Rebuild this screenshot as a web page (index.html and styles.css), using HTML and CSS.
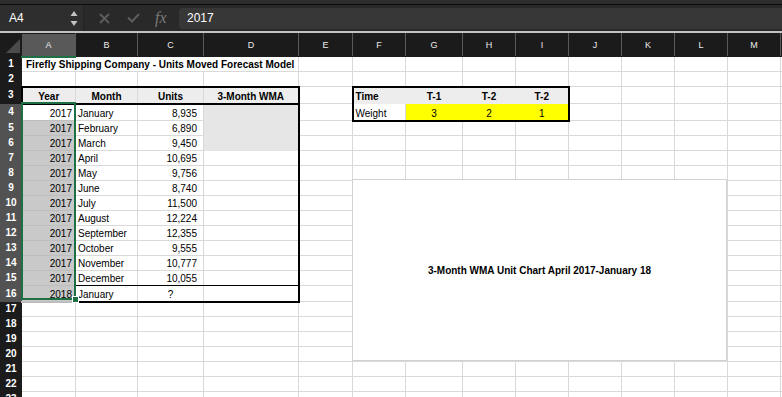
FILE: index.html
```html
<!doctype html>
<html lang="en">
<head>
    <meta charset="UTF-8">
    <title>Firefly Shipping Company - Forecast</title>
    <link rel="stylesheet" href="styles.css">
</head>
<body>

    <div class="topbar"></div>

    <div class="formula-bar">
        <div class="name-box">
            <span>A4</span>
            <svg class="spin" width="8" height="17" viewBox="0 0 8 17">
                <path d="M4 1 L7.5 6 L0.5 6 Z" fill="#c4c4c4"/>
                <path d="M4 16 L7.5 11 L0.5 11 Z" fill="#c4c4c4"/>
            </svg>
        </div>
        <div class="fx-tools">
            <svg width="11" height="11" viewBox="0 0 11 11">
                <path d="M1 1 L10 10 M10 1 L1 10" stroke="#5c5c5c" stroke-width="2"/>
            </svg>
            <svg width="13" height="10" viewBox="0 0 13 10">
                <path d="M1 4.5 L5 8.5 L12 1" stroke="#5c5c5c" stroke-width="2" fill="none"/>
            </svg>
            <i class="fx">fx</i>
        </div>
        <div class="formula-input">2017</div>
    </div>

    <div class="sheet">
        <table class="grid">
            <colgroup>
                <col style="width:21px">
                <col style="width:54px">
                <col style="width:62px">
                <col style="width:66px">
                <col style="width:95px">
                <col style="width:54px">
                <col style="width:53px">
                <col style="width:57px">
                <col style="width:53px">
                <col style="width:53px">
                <col style="width:53px">
                <col style="width:53px">
                <col style="width:53px">
                <col style="width:53px">
                <col style="width:53px">
            </colgroup>

            <tr class="heads">
                <th class="corner">
                    <svg width="21" height="22" viewBox="0 0 21 22"><path d="M19 5 L19 19 L5 19 Z" fill="#4b4b4b"/></svg>
                </th>
                <th class="ch on">A</th>
                <th class="ch">B</th>
                <th class="ch">C</th>
                <th class="ch">D</th>
                <th class="ch">E</th>
                <th class="ch">F</th>
                <th class="ch">G</th>
                <th class="ch">H</th>
                <th class="ch">I</th>
                <th class="ch">J</th>
                <th class="ch">K</th>
                <th class="ch">L</th>
                <th class="ch">M</th>
                <th class="ch"></th>
            </tr>

            <tr>
                <th class="rh">1</th>
                <td colspan="4" class="title">Firefly Shipping Company - Units Moved Forecast Model</td>
                <td></td><td></td><td></td><td></td><td></td><td></td><td></td><td></td><td></td><td></td>
            </tr>
            <tr>
                <th class="rh">2</th>
                <td></td><td></td><td></td><td></td>
                <td></td><td></td><td></td><td></td><td></td><td></td><td></td><td></td><td></td><td></td>
            </tr>
            <tr class="tall">
                <th class="rh">3</th>
                <td class="hd left">Year</td>
                <td class="hd">Month</td>
                <td class="hd">Units</td>
                <td class="hd right">3-Month WMA</td>
                <td></td>
                <td class="w-hd w-left">Time</td>
                <td class="w-hd c">T-1</td>
                <td class="w-hd c">T-2</td>
                <td class="w-hd c w-right">T-2</td>
                <td></td><td></td><td></td><td></td><td></td>
            </tr>
            <tr class="tall">
                <th class="rh on">4</th>
                <td class="yr active">2017</td>
                <td>January</td>
                <td class="num">8,935</td>
                <td class="right wma">&nbsp;</td>
                <td></td>
                <td class="w-row w-left">Weight</td>
                <td class="w-row yel c">3</td>
                <td class="w-row yel c">2</td>
                <td class="w-row yel c w-right">1</td>
                <td></td><td></td><td></td><td></td><td></td>
            </tr>
            <tr>
                <th class="rh on">5</th>
                <td class="yr">2017</td><td>February</td><td class="num">6,890</td><td class="right wma"></td>
                <td></td><td></td><td></td><td></td><td></td><td></td><td></td><td></td><td></td><td></td>
            </tr>
            <tr>
                <th class="rh on">6</th>
                <td class="yr">2017</td><td>March</td><td class="num">9,450</td><td class="right wma"></td>
                <td></td><td></td><td></td><td></td><td></td><td></td><td></td><td></td><td></td><td></td>
            </tr>
            <tr>
                <th class="rh on">7</th>
                <td class="yr">2017</td><td>April</td><td class="num">10,695</td><td class="right"></td>
                <td></td><td></td><td></td><td></td><td></td><td></td><td></td><td></td><td></td><td></td>
            </tr>
            <tr>
                <th class="rh on">8</th>
                <td class="yr">2017</td><td>May</td><td class="num">9,756</td><td class="right"></td>
                <td></td><td></td><td></td><td></td><td></td><td></td><td></td><td></td><td></td><td></td>
            </tr>
            <tr>
                <th class="rh on">9</th>
                <td class="yr">2017</td><td>June</td><td class="num">8,740</td><td class="right"></td>
                <td></td><td></td><td></td><td></td><td></td><td></td><td></td><td></td><td></td><td></td>
            </tr>
            <tr>
                <th class="rh on">10</th>
                <td class="yr">2017</td><td>July</td><td class="num">11,500</td><td class="right"></td>
                <td></td><td></td><td></td><td></td><td></td><td></td><td></td><td></td><td></td><td></td>
            </tr>
            <tr>
                <th class="rh on">11</th>
                <td class="yr">2017</td><td>August</td><td class="num">12,224</td><td class="right"></td>
                <td></td><td></td><td></td><td></td><td></td><td></td><td></td><td></td><td></td><td></td>
            </tr>
            <tr>
                <th class="rh on">12</th>
                <td class="yr">2017</td><td>September</td><td class="num">12,355</td><td class="right"></td>
                <td></td><td></td><td></td><td></td><td></td><td></td><td></td><td></td><td></td><td></td>
            </tr>
            <tr>
                <th class="rh on">13</th>
                <td class="yr">2017</td><td>October</td><td class="num">9,555</td><td class="right"></td>
                <td></td><td></td><td></td><td></td><td></td><td></td><td></td><td></td><td></td><td></td>
            </tr>
            <tr>
                <th class="rh on">14</th>
                <td class="yr">2017</td><td>November</td><td class="num">10,777</td><td class="right"></td>
                <td></td><td></td><td></td><td></td><td></td><td></td><td></td><td></td><td></td><td></td>
            </tr>
            <tr>
                <th class="rh on">15</th>
                <td class="yr">2017</td><td class="pre-last">December</td><td class="num pre-last">10,055</td><td class="right pre-last"></td>
                <td></td><td></td><td></td><td></td><td></td><td></td><td></td><td></td><td></td><td></td>
            </tr>
            <tr class="mid">
                <th class="rh on">16</th>
                <td class="yr last">2018</td><td class="last">January</td><td class="last c">?</td><td class="right last"></td>
                <td></td><td></td><td></td><td></td><td></td><td></td><td></td><td></td><td></td><td></td>
            </tr>
            <tr>
                <th class="rh">17</th>
                <td></td><td></td><td></td><td></td>
                <td></td><td></td><td></td><td></td><td></td><td></td><td></td><td></td><td></td><td></td>
            </tr>
            <tr>
                <th class="rh">18</th>
                <td></td><td></td><td></td><td></td>
                <td></td><td></td><td></td><td></td><td></td><td></td><td></td><td></td><td></td><td></td>
            </tr>
            <tr>
                <th class="rh">19</th>
                <td></td><td></td><td></td><td></td>
                <td></td><td></td><td></td><td></td><td></td><td></td><td></td><td></td><td></td><td></td>
            </tr>
            <tr>
                <th class="rh">20</th>
                <td></td><td></td><td></td><td></td>
                <td></td><td></td><td></td><td></td><td></td><td></td><td></td><td></td><td></td><td></td>
            </tr>
            <tr>
                <th class="rh">21</th>
                <td></td><td></td><td></td><td></td>
                <td></td><td></td><td></td><td></td><td></td><td></td><td></td><td></td><td></td><td></td>
            </tr>
            <tr>
                <th class="rh">22</th>
                <td></td><td></td><td></td><td></td>
                <td></td><td></td><td></td><td></td><td></td><td></td><td></td><td></td><td></td><td></td>
            </tr>
            <tr>
                <th class="rh">23</th>
                <td></td><td></td><td></td><td></td>
                <td></td><td></td><td></td><td></td><td></td><td></td><td></td><td></td><td></td><td></td>
            </tr>
        </table>

        <!-- selected range A4:A16 -->
        <div class="selection"></div>

        <div class="chart">
            <span>3-Month WMA Unit Chart April 2017-January 18</span>
        </div>
    </div>

</body>
</html>
```

FILE: styles.css
```css
body{
    margin: 0;
    background-color: #fff;
    font-family: "Liberation Sans", Arial, sans-serif;
    overflow: hidden;
}

.topbar{
    height: 4px;
    background-color: #2d2d2d;
    border-bottom: 1px solid #0c0c0c;
}

.formula-bar{
    display: flex;
    height: 26px;
    background-color: #292929;
    color: #fff;
    font-size: 12px;
}

.name-box{
    width: 84px;
    display: flex;
    align-items: center;
    justify-content: space-between;
    padding: 0 5px 0 9px;
    box-sizing: border-box;
    background-color: #2e2e2e;
    border-right: 1px solid #222;
}

.fx-tools{
    width: 95px;
    display: flex;
    align-items: center;
    gap: 17px;
    padding-left: 15px;
    box-sizing: border-box;
}

.fx{
    font-family: "Liberation Serif", serif;
    font-size: 16px;
    color: #7a7a7a;
    margin-left: -2px;
}

.formula-input{
    flex: 1;
    margin: 3px 0 2px;
    padding-left: 8px;
    line-height: 21px;
    background-color: #373737;
    border-radius: 4px 0 0 4px;
}

.sheet{
    position: relative;
    border-top: 2px solid #c2c2c2;
    overflow: hidden;
    width: 782px;
}

.grid{
    border-collapse: collapse;
    table-layout: fixed;
    width: 833px;
}

.grid tr{
    height: 15px;
}

.grid tr.heads{ height: 22px; }
.grid tr.tall{ height: 17px; }
.grid tr.mid{ height: 16px; }

.grid td{
    border: 1px solid #d9d9d9;
    padding: 0 2px;
    font-size: 10px;
    line-height: 12px;
    color: #000;
    white-space: nowrap;
    overflow: hidden;
    vertical-align: bottom;
}

.ch{
    background-color: #1b1b1b;
    color: #ececec;
    font-size: 9px;
    font-weight: normal;
    border: 1px solid #1b1b1b;
    border-right-color: #5a5a5a;
    padding: 0;
}

.ch.on{
    background-color: #595959;
    border-bottom: 2px solid #1d7044;
}

.corner{
    background-color: #1b1b1b;
    border: 1px solid #1b1b1b;
    padding: 0;
    line-height: 0;
}

.rh{
    background-color: #1b1b1b;
    color: #fff;
    font-size: 10px;
    font-weight: bold;
    border: 1px solid #1b1b1b;
    padding: 0;
    text-align: center;
    line-height: 12px;
}

.rh.on{
    background-color: #525252;
    border-color: #525252;
}

.grid td.title{
    font-weight: bold;
    padding-left: 4px;
}

.grid td.hd{
    background-color: #ededed;
    font-weight: bold;
    text-align: center;
    border-top: 2px solid #000;
    border-bottom: 2px solid #000;
}

.grid td.left{ border-left: 2px solid #000; }
.grid td.right{ border-right: 2px solid #000; }

.grid td.pre-last{ border-bottom: 1px solid #000; }
.grid td.last{ border-bottom: 2px solid #000; }

.grid td.yr{
    text-align: right;
    padding-right: 3px;
    background-color: #c9c9c9;
    border-bottom-color: #bdbdbd;
}

.grid td.yr.active{
    background-color: #fff;
}

.grid td.num{
    text-align: right;
    padding-right: 6px;
}

.grid td.c{ text-align: center; }

.grid td.wma{
    background-color: #e6e6e6;
    border-bottom-color: #e6e6e6;
}

/* weight table F3:I4 */
.grid td.w-hd{
    background-color: #ededed;
    font-weight: bold;
    border-top: 2px solid #000;
    border-bottom-color: #ededed;
    border-right-color: #ededed;
}

.grid td.w-row{
    border-bottom: 2px solid #000;
}

.grid td.yel{
    background-color: #ffff00;
    border-right-color: #ffff00;
}

.grid td.w-left{ border-left: 2px solid #000; }
.grid td.w-right{ border-right: 2px solid #000; }

.selection{
    position: absolute;
    left: 21px;
    top: 69px;
    width: 55px;
    height: 198px;
    border: 2px solid #1d7044;
    box-sizing: border-box;
}

.selection::after{
    content: "";
    position: absolute;
    right: -5px;
    bottom: -5px;
    width: 5px;
    height: 5px;
    background-color: #1d7044;
    border: 1px solid #fff;
}

.chart{
    position: absolute;
    left: 352px;
    top: 146px;
    width: 375px;
    height: 182px;
    box-sizing: border-box;
    border: 1px solid #d2d2d2;
    background-color: #fff;
    display: flex;
    align-items: center;
    justify-content: center;
    font-size: 10px;
    font-weight: bold;
    color: #000;
}
```
